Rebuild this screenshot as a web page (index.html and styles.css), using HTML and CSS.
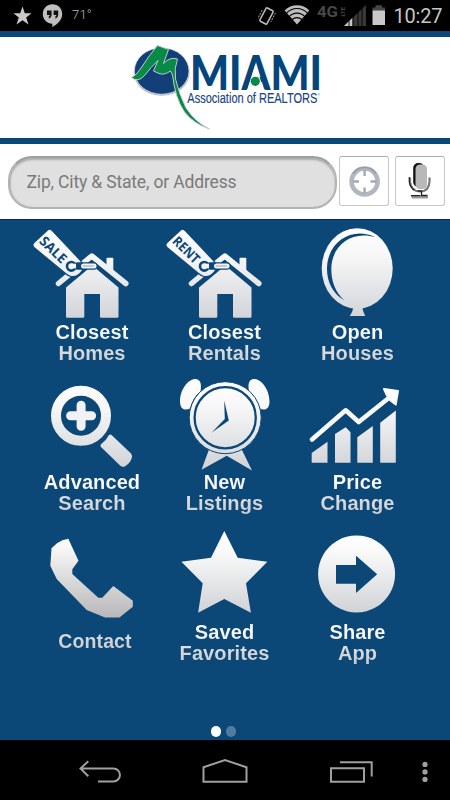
FILE: index.html
```html
<!DOCTYPE html>
<html lang="en">
<head>
<meta charset="utf-8">
<title>Miami Association of Realtors</title>
<link rel="stylesheet" href="styles.css">
</head>
<body>
<svg class="defs" width="0" height="0" aria-hidden="true">
  <defs>
    <linearGradient id="r1" gradientUnits="userSpaceOnUse" x1="0" y1="228" x2="0" y2="318"><stop offset="0" stop-color="#fff"/><stop offset=".35" stop-color="#f5f5f6"/><stop offset="1" stop-color="#d2d4d8"/></linearGradient>
    <linearGradient id="r2" gradientUnits="userSpaceOnUse" x1="0" y1="380" x2="0" y2="470"><stop offset="0" stop-color="#fff"/><stop offset=".3" stop-color="#f7f7f8"/><stop offset="1" stop-color="#d0d2d6"/></linearGradient>
    <linearGradient id="r3" gradientUnits="userSpaceOnUse" x1="0" y1="535" x2="0" y2="614"><stop offset="0" stop-color="#fff"/><stop offset=".2" stop-color="#fafafa"/><stop offset="1" stop-color="#cfd2d6"/></linearGradient>
    <linearGradient id="ph" gradientUnits="userSpaceOnUse" x1="0" y1="539" x2="0" y2="617"><stop offset="0" stop-color="#fff"/><stop offset="1" stop-color="#b8b8ba"/></linearGradient>
    <symbol id="house" viewBox="25 220 133 102">
      <path d="M106.500 258.500q0-.8.800-.8h5.200q.8 0 .8.800V274l-6.800-6z" fill="url(#r1)"/>
      <path d="M58.500 283.500 91.800 256 125.800 283.500" fill="none" stroke="url(#r1)" stroke-width="5.500" stroke-linecap="round" stroke-linejoin="round"/>
      <path d="M92.300 265.500 118.500 287.500V316.500q0 1.200-1.200 1.200H101.200q-1.200 0-1.200-1.200V294H84.300V316.500q0 1.200-1.200 1.200H67.200q-1.200 0-1.200-1.200V287.500z" fill="url(#r1)"/>
      <path d="M47.300 230.200q2.200-2 4.500 0L80.500 260.500q5 5.500 1.500 10.500-4.500 6.500-11 5.500-3-.6-5.500-3L34 247.500q-2.300-2.500 0-5z" fill="url(#r1)" stroke="#0b4878" stroke-width="1.200"/>
      <circle cx="71.300" cy="266.300" r="4.300" fill="#f4f4f5" stroke="#0b4878" stroke-width="2.600"/>
      <rect x="74" y="262.300" width="23.500" height="7.400" rx="3.700" fill="#0b4878"/>
      <rect x="71" y="263.700" width="5" height="4.600" fill="#f4f4f5"/>
      <rect x="81" y="263.500" width="15.500" height="5" rx="2.500" fill="#f4f4f5"/>
      <path d="M82.500 266H94" stroke="#8fa8bd" stroke-width="1"/>
    </symbol>
  </defs>
</svg>

<div class="status">
  <svg width="100" height="31" viewBox="0 0 100 31">
    <path d="M22.500 6.500 24.800 13.200H31.500L26.200 17.500 28.500 24.500 22.500 20.300 16.500 24.500 18.800 17.500 13.500 13.200H20.200z" fill="#cacaca"/>
    <path d="M52.500 4.300C58 4.300 62.200 8.500 62.200 14C62.200 19.500 58 24 52.300 27V23.700C47 23.700 42.800 19.400 42.800 14C42.800 8.500 47 4.300 52.500 4.300z" fill="#bfbfbf"/>
    <path d="M47 10.500h4.600v4.700q0 2.500-2.800 3.500v-2.500q1-.3 1-1.200H47zM53.600 10.500h4.600v4.700q0 2.500-2.800 3.500v-2.500q1-.3 1-1.200h-2.800z" fill="#111"/>
    <text x="72" y="18.500" class="temp">71°</text>
  </svg>
  <svg width="192" height="31" viewBox="258 0 192 31">
    <g transform="rotate(28 266.500 16)"><rect x="262.500" y="8.500" width="8" height="15" rx="1" fill="none" stroke="#bbb" stroke-width="1.500"/><path d="M260 13v10M273 9v10" stroke="#999" stroke-width="1" stroke-dasharray="2 1"/></g>
    <path d="M284.700 10.500a17 17 0 0 1 24.600 0L297 24.500z" fill="#bdbdbd"/>
    <path d="M286.500 13.200a14 14 0 0 1 21 0M289.300 16.500a10.500 10.500 0 0 1 15.400 0M292.200 19.500a7 7 0 0 1 9.600 0" fill="none" stroke="#000" stroke-width="1.100"/>
    <text x="317" y="17" class="fourg" textLength="21" lengthAdjust="spacingAndGlyphs">4G</text>
    <text transform="translate(344.500 16.500) rotate(-90)" class="lte">LTE</text>
    <path d="M344 26 366 5V26z" fill="#383838"/>
    <path d="M344 26 352.500 17.800V26z" fill="#c8c8c8"/>
    <path d="M349 17v9M353 12v14M358 9v17M362 5v21" stroke="#000" stroke-width=".9"/>
    <path d="M375.500 5.300h6.500v2.200h3V11h-12.500V7.500h3z" fill="#454545"/>
    <path d="M372.500 10.500H385V25h-12.500z" fill="#c8c8c8"/>
    <text x="393.500" y="23.300" class="clock" textLength="49">10:27</text>
  </svg>
</div>

<header class="brand">
  <svg width="210" height="101" viewBox="120 37 210 101">
    <ellipse cx="161.700" cy="72.300" rx="28" ry="23.500" fill="#b4b9c0"/>
    <ellipse cx="161.700" cy="71" rx="27.300" ry="23.200" fill="#123f78" stroke="#fff" stroke-width=".6"/>
    <path d="M131.500 77.500Q137 75 141 68Q150 54 157.500 45.500L168.500 49.500 163.500 63.500Q170 56.500 177.500 59Q174 68 175.500 79Q179 94 186 108Q195 122 209.500 129Q194 124 184.500 112Q175 98 172.500 75L170.500 71Q164 75.500 159 73.500L153.500 71 158 60.500Q151 67 144.500 75.500Q138 83 131.500 77.500z" fill="#078a45" stroke="#c3cbd0" stroke-width="1"/>
    <text x="190" y="90" class="miami" textLength="132" lengthAdjust="spacingAndGlyphs">MIAMI</text>
    <path d="M255.400 64 264 90.800H246.800z" fill="#fff"/>
    <circle cx="255.300" cy="81.300" r="4.600" fill="#078a45"/>
    <text x="187.300" y="103.200" class="assoc" textLength="130" lengthAdjust="spacingAndGlyphs">Association of REALTORS</text>
    <text x="317.800" y="96" class="reg">®</text>
  </svg>
</header>

<section class="search">
  <div class="field"><span>Zip, City &amp; State, or Address</span></div>
  <div class="button">
    <svg width="46" height="46" viewBox="341 158 46 46">
      <circle cx="364.600" cy="181.500" r="13" fill="none" stroke="#b2b7bf" stroke-width="4.600"/>
      <path d="M353 173.500a14 14 0 0 1 23 0" fill="none" stroke="#959ca8" stroke-width="1.500"/>
      <path d="M364.600 170v6M364.600 187.500v6M353 181.500h6M370.500 181.500h6" stroke="#a3a9b3" stroke-width="2.400"/>
    </svg>
  </div>
  <div class="button">
    <svg width="46" height="46" viewBox="397 158 46 46">
      <rect x="413.200" y="163" width="11" height="24" rx="5" fill="#111"/>
      <rect x="415.500" y="164.500" width="11.500" height="24.500" rx="4.500" fill="#b6b8ba"/>
      <path d="M410 177.500v4q1 10 10.200 10q8.800 0 9.300-10v-4" fill="none" stroke="#777" stroke-width="2.200"/>
      <path d="M409.300 177v5q.5 5 5 8" fill="none" stroke="#222" stroke-width="1.200"/>
      <path d="M411 196q9-2 17 0v2.500h-16z" fill="#999"/>
      <path d="M417.500 191h4v4.500h6M411 195.700h9" fill="none" stroke="#222" stroke-width="1.300"/>
    </svg>
  </div>
</section>

<main>
  <div class="grid">
    <div class="tile"><svg viewBox="25 220 133 102"><use href="#house" x="25" y="220" width="133" height="102"/><text class="tag" transform="translate(38.500 242) rotate(44.500)" textLength="32" lengthAdjust="spacingAndGlyphs">SALE</text></svg><b>Closest</b><b class="low">Homes</b></div>
    <div class="tile"><svg viewBox="25 220 133 102"><use href="#house" x="25" y="220" width="133" height="102"/><text class="tag" transform="translate(38.500 242) rotate(44.500)" textLength="32" lengthAdjust="spacingAndGlyphs">RENT</text></svg><b>Closest</b><b class="low">Rentals</b></div>
    <div class="tile"><svg viewBox="291 220 133 102">
      <path d="M353.500 305h8.500q.5 6 3.200 11h-15.400q3.500-5 3.700-11z" fill="url(#r1)"/>
      <ellipse cx="357.200" cy="268.600" rx="35.500" ry="40.300" fill="url(#r1)"/>
      <path d="M375.500 237.300C353 226 327 241 327 269C327 282 333 294 344.500 300.500C335 292 331.300 281 331.300 269C331.300 247 350 230 375.500 237.300z" fill="#0b4878"/>
    </svg><b>Open</b><b class="low">Houses</b></div>

    <div class="tile"><svg viewBox="25 370 133 102">
      <circle cx="81" cy="415.700" r="25" fill="none" stroke="url(#r2)" stroke-width="10"/>
      <path d="M81.100 405.200v21M70.600 415.700h21" stroke="#f2f2f4" stroke-width="9" stroke-linecap="round"/>
      <path d="M109 435q1.500-1 2.800.2L131 453.500q1.500 2 .8 4.500-1.800 5.500-7 8.500-2.500.8-4.500-.8L101 447q-1.200-1.500 0-2.700 5-3.500 8-9.300z" fill="url(#r2)"/>
    </svg><b>Advanced</b><b class="low">Search</b></div>
    <div class="tile"><svg viewBox="158 370 133 102">
      <path id="bell" d="M200.500 391.500C202 383 200 379 195 379C186 380 180 392 180 401C180 409 184 411 190 408.500Q193 397 200.500 391.500z" fill="url(#r2)"/>
      <use href="#bell" transform="translate(449.500 0) scale(-1 1)"/>
      <path d="M209 449.500 201.500 469.800 226.700 455.700 252 470.500 241.700 449.500z" fill="url(#r2)"/>
      <circle cx="225.200" cy="417.700" r="36" fill="url(#r2)" stroke="#0b4878" stroke-width="1"/>
      <circle cx="225.200" cy="417.700" r="30.600" fill="none" stroke="#0b4878" stroke-width="2.300"/>
      <path d="M224.200 400.500 228.800 420.500 211.500 432.700 224.800 419z" fill="#0b4878"/>
    </svg><b>New</b><b class="low">Listings</b></div>
    <div class="tile"><svg viewBox="291 370 133 102">
      <path d="M311.700 453 327.500 441.700V462.800H311.700zM335 434 345.700 427.200 350.500 432.300V462.800H335zM357.300 437.300 372.800 426V462.800H357.300zM380.200 422.700 395.800 410.500V462.800H380.200z" fill="url(#r2)"/>
      <path d="M312 439.500 345.700 410.300 358.700 422 390 397" fill="none" stroke="#fafafa" stroke-width="4.600" stroke-linecap="round" stroke-linejoin="round"/>
      <path d="M384 389 398 391 395.700 404.500 390.500 400.500 387 395.500z" fill="#fff" stroke="#fff" stroke-width="2" stroke-linejoin="round"/>
    </svg><b>Price</b><b class="low">Change</b></div>

    <div class="tile"><svg viewBox="25 520 133 102">
      <path d="M51.500 548.300 57 543.300Q62 539.500 68.300 538.800L78.500 560.700 72.300 569.300V574L98.300 597.700H102.300L113.300 586 132.800 600.700V606.700L119.500 617.400H105L86.700 610 56.700 579 50.300 565.700z" fill="url(#ph)"/>
    </svg><b class="low contact">Contact</b></div>
    <div class="tile"><svg viewBox="158 520 133 102">
      <path d="M224.300 531 237.700 557.700 267.300 561.700 246 583.300 250.900 612.700 224.300 599 198.100 612.700 202.700 583.300 181.400 561.700 211 557.700z" fill="url(#r3)"/>
    </svg><b>Saved</b><b class="low">Favorites</b></div>
    <div class="tile"><svg viewBox="291 520 133 102">
      <path fill-rule="evenodd" d="M356.600 535.500a38.500 38.500 0 1 1-.01 0zM336 565V583.700H356V593L377.200 574.300 356 555.700V565z" fill="url(#r3)"/>
    </svg><b>Share</b><b class="low">App</b></div>
  </div>
  <div class="pages"><i class="on"></i><i></i></div>
</main>

<nav>
  <svg width="44" height="60" viewBox="78 740 44 60"><path d="M81 768.500H113.500a6.400 6.400 0 0 1 0 12.900H98M88.300 761.300 80.500 768.500 88.300 776.300"/></svg>
  <svg width="48" height="60" viewBox="201 740 48 60"><path d="M203.500 767.300 225 760 246.500 767.300V781.700H203.500z"/></svg>
  <svg width="46" height="60" viewBox="328 740 46 60"><path d="M331 768.200H364V781.700H331zM340 762.300H371.700V776.500"/></svg>
  <svg class="more" width="8" height="60" viewBox="421.500 740 8 60"><circle cx="425.500" cy="764.400" r="2.600"/><circle cx="425.500" cy="771.900" r="2.600"/><circle cx="425.500" cy="779.400" r="2.600"/></svg>
</nav>
</body>
</html>
```
FILE: styles.css
```css
* { box-sizing: border-box; }
body { margin: 0; width: 450px; height: 800px; overflow: hidden; background: #000; font-family: "Liberation Sans", Arial, sans-serif; }
svg { display: block; }
.defs { position: absolute; }
.status { height: 31px; background: #000; display: flex; justify-content: space-between; }
.temp { font: 300 13px Roboto, sans-serif; fill: #bbb; letter-spacing: .2px; }
.clock { font: 400 20px Roboto, sans-serif; fill: #c6c6c6; }
.fourg { font: 700 15px Roboto, sans-serif; fill: #484848; }
.lte { font: 700 6px Roboto, sans-serif; fill: #484848; }
.brand { height: 113px; background: #fff; border-top: 6px solid #0b4878; border-bottom: 6px solid #0b4878; padding-left: 120px; }
.miami { font: 900 48px Lato, sans-serif; fill: #06457c; }
.assoc { font: 400 14px "Liberation Sans", sans-serif; fill: #174482; stroke: #174482; stroke-width: .15px; }
.reg { font: 400 3px "Liberation Sans", sans-serif; fill: #174482; }
.search { height: 76px; background: #fff; border-bottom: 1px solid #06247c; display: flex; padding: 12px 0 0 8px; }
.field { width: 329px; height: 53px; border: 2px solid #b3b3b3; border-top-color: #9e9e9e; border-radius: 24px; background: #e0e0e0; box-shadow: inset 0 2px 2px #aaa, inset 1px 0 1px #c6c6c6; padding-left: 16.500px; font: 400 17.500px/48px Roboto, sans-serif; letter-spacing: -.16px; color: #7a7a7a; white-space: nowrap; }
.button { width: 50px; height: 50px; border: 1px solid #c6c6c6; border-top-color: #aaa; border-radius: 3px; background: #fff; margin-left: 2px; padding: 1px; }
.button + .button { margin-left: 6px; }
main { height: 520px; background: #0b4878; }
.grid { display: grid; grid-template-columns: repeat(3, 133px); grid-auto-rows: 150px; padding-left: 25px; }
.tile { text-align: center; }
.tile svg { width: 133px; height: 102px; }
.tile b { display: block; font-size: 20px; line-height: 21px; letter-spacing: .1px; color: transparent; background: linear-gradient(#fff 30%, #ebebed); -webkit-background-clip: text; background-clip: text; }
.tile:nth-child(3n+1) b { padding-left: 1px; }
.tile .low { background-image: linear-gradient(#dedfe2 20%, #c9cace); }
.tile .contact.low { font-size: 19.500px; line-height: 23px; padding: 8px 0 0 7px; }
.tag { font: 700 13.500px "Open Sans", sans-serif; fill: #0b4878; }
.pages { display: flex; justify-content: center; gap: 4.500px; padding-top: 56px; margin-right: 3px; }
.pages i { width: 10.500px; height: 10.500px; border-radius: 50%; background: #4f7c9f; }
.pages .on { background: #fff; }
nav { height: 60px; background: #000; display: grid; grid-template-columns: 123px 127px 93px 8px; padding-left: 78px; }
nav path { fill: none; stroke: #a0a0a0; stroke-width: 2; }
nav circle { fill: #a0a0a0; }
```
